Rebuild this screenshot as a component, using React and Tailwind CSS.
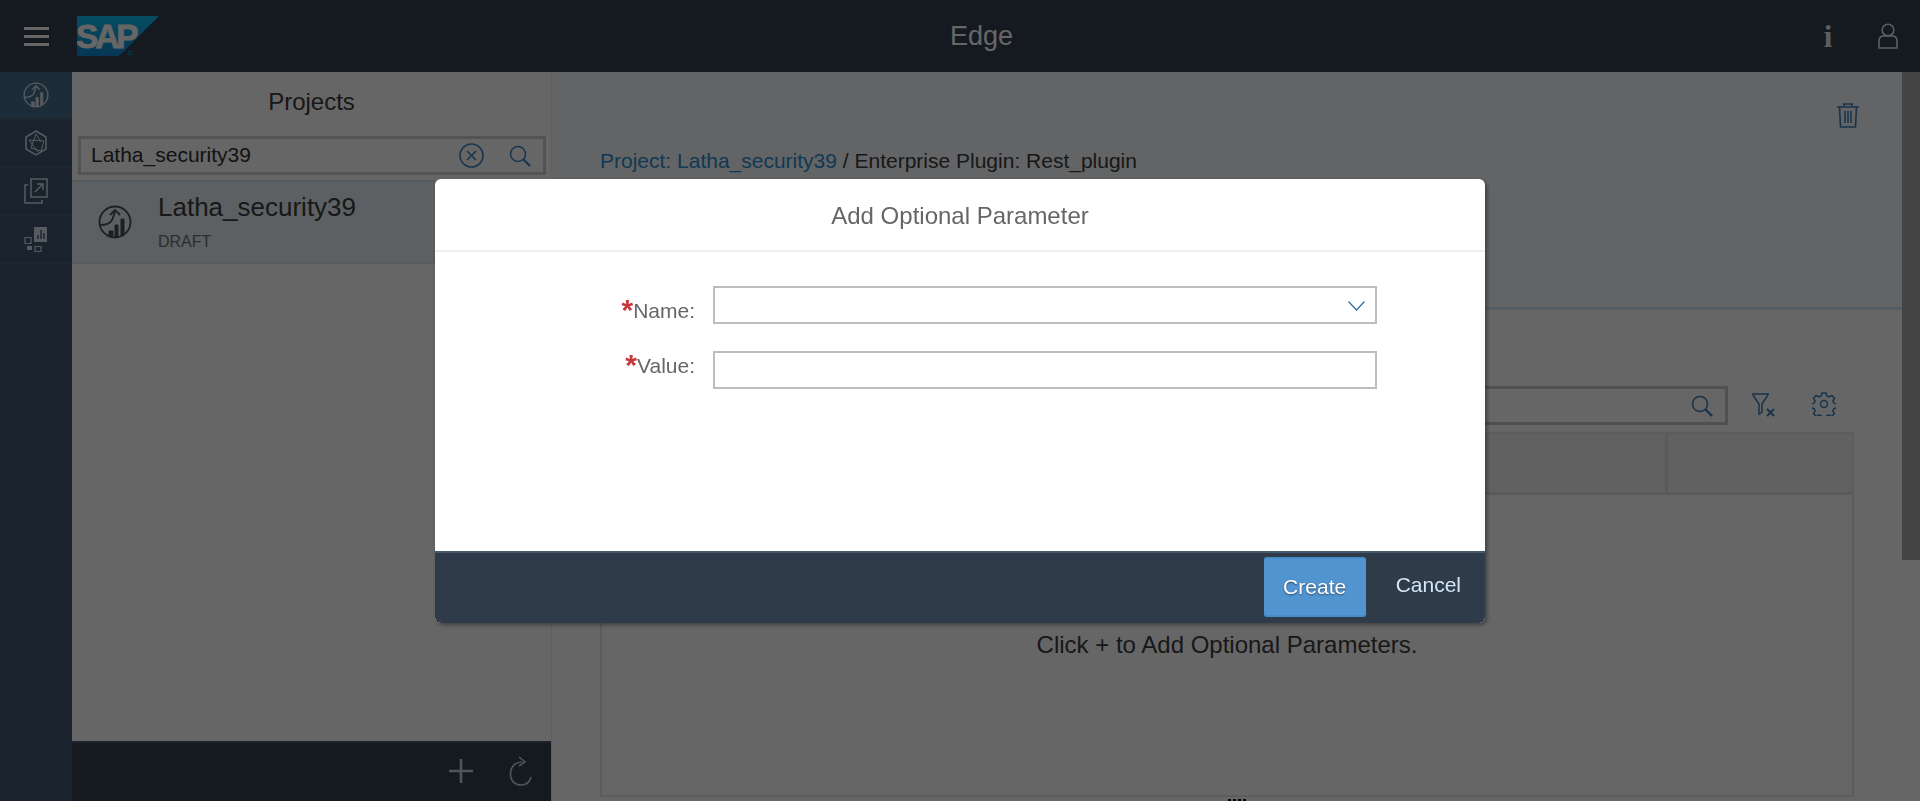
import { useState } from 'react';

// icons for the left rail
const RailChart = ({ className }) => (
  <svg className={className} viewBox="0 0 34 34" fill="none" stroke="currentColor" strokeWidth="1.800">
    <circle cx="17" cy="17" r="15.500" />
    <path d="M2 20c6 0 10-1 12-5 1-2 2-5 3-9" />
    <path d="M12 10l5-5 5 5" />
    <path d="M11 32v-6h4v6zM17 32V20h3v12zM23 31V14h3v15z" fill="currentColor" strokeWidth="1" />
  </svg>
);

const RailCube = ({ className }) => (
  <svg className={className} viewBox="0 0 24 26" fill="none" stroke="currentColor" strokeWidth="1.500">
    <path d="M12 1l10 6v12l-10 6-10-6V7z" />
    <path d="M12 4L7 18l10 3 3-10-15-1 9 12M12 4l5 8" strokeWidth="1" />
  </svg>
);

const RailOpen = ({ className }) => (
  <svg className={className} viewBox="0 0 24 26" fill="none" stroke="currentColor" strokeWidth="1.500">
    <path d="M7 1h16v18H7z" />
    <path d="M11 14l8-8M13 6h6v6" />
    <path d="M4 7H1v18h17v-3" />
  </svg>
);

const RailReport = ({ className }) => (
  <svg className={className} viewBox="0 0 24 26" fill="none">
    <path d="M10 1h13v15H10z" fill="currentColor" />
    <path d="M14 13V9M17 13V4M20 13V7" stroke="#425870" strokeWidth="1.400" />
    <path d="M1 11.500h6v6H1zM11 20.500h6v5h-6z" stroke="currentColor" strokeWidth="1.200" />
    <path d="M3 20h5v4H3z" fill="currentColor" />
  </svg>
);

const SearchIcon = ({ className }) => (
  <svg className={className} viewBox="0 0 22 22" fill="none" stroke="currentColor">
    <circle cx="9" cy="9" r="7.500" strokeWidth="1.600" />
    <path d="M14.500 14.500L21 21" strokeWidth="2.400" />
  </svg>
);

function Logo() {
  return (
    <svg className="w-[82px] h-[40px] shrink-0" viewBox="0 0 82 40">
      <defs>
        <linearGradient id="sapBlue" x1="0" y1="0" x2="0" y2="1">
          <stop offset="0" stopColor="#0fc0f0" />
          <stop offset="1" stopColor="#1088d8" />
        </linearGradient>
      </defs>
      <path d="M0 0h82L42 40H0z" fill="url(#sapBlue)" />
      <text x="-1" y="32" fontFamily="Liberation Sans, sans-serif" fontWeight="700" fontSize="33.500" letterSpacing="-3.200" fill="#ffffff" stroke="#ffffff" strokeWidth="0.800">
        SAP
      </text>
      <circle cx="53" cy="37" r="2" fill="none" stroke="#1090e0" strokeWidth="1" />
    </svg>
  );
}

function TopBar() {
  return (
    <header className="h-[72px] shrink-0 flex items-center bg-[#32414e]">
      <div className="w-[77px] shrink-0 flex flex-col gap-[5px] pl-6">
        <span className="block w-[25px] h-[3px] bg-white" />
        <span className="block w-[25px] h-[3px] bg-white" />
        <span className="block w-[25px] h-[3px] bg-white" />
      </div>
      <Logo />
      <div className="flex-1 pl-[4px] text-center text-[27px] text-white">Edge</div>
      <div className="w-[120px] shrink-0 flex items-center text-[#e6edf2]">
        <span className="w-6 ml-4 text-center text-[31px] leading-none font-bold font-['Liberation_Serif',serif]">i</span>
        <svg className="w-[20px] h-[26px] ml-[38px]" viewBox="0 0 20 26" fill="none" stroke="currentColor" strokeWidth="1.600">
          <circle cx="10" cy="7" r="5.800" />
          <path d="M1 25v-7c0-3 2-5 5-5h8c3 0 5 2 5 5v7z" />
        </svg>
      </div>
    </header>
  );
}

function Rail() {
  const items = [RailChart, RailCube, RailOpen, RailReport];
  return (
    <nav className="w-[72px] shrink-0 bg-[#425870]">
      {items.map((Icon, i) => (
        <div
          key={i}
          className={`h-[48px] flex items-center justify-center border-b-2 border-[#4a6279] text-[#d5e4f0] ${
            i === 0 ? 'bg-[#46708f]' : ''
          }`}
        >
          <Icon className={i === 0 ? 'w-[26px] h-[26px]' : 'w-[24px] h-[26px]'} />
        </div>
      ))}
    </nav>
  );
}

function ProjectsPanel() {
  const [query] = useState('Latha_security39');
  return (
    <aside className="w-[479px] shrink-0 flex flex-col bg-white">
      <div className="h-[64px] shrink-0 pt-[16px] text-center text-[24px] leading-[28px] text-[#3c3c3c]">Projects</div>
      <div className="ml-[6px] mr-[5px] h-[39px] shrink-0 flex items-center border-[3px] border-[#cfcfcf] pl-[10px] pr-[12px] pb-[2px] text-[21px] text-[#303030]">
        <span className="flex-1">{query}</span>
        <svg className="w-[25px] h-[25px] mt-[2px] text-[#3f86c4]" viewBox="0 0 25 25" fill="none" stroke="currentColor" strokeWidth="1.600">
          <circle cx="12.500" cy="12.500" r="11.500" />
          <path d="M8 8l9 9M17 8l-9 9" />
        </svg>
        <SearchIcon className="w-[22px] h-[22px] mt-[2px] ml-[25px] text-[#3f86c4]" />
      </div>
      <div className="mt-[5px] h-[84px] shrink-0 flex items-center border-t-2 border-b-2 border-[#dce5ea] bg-[#e6f0f6]">
        <RailChart className="w-[34px] h-[34px] ml-[26px] text-[#4a4f55]" />
        <div className="ml-[26px] pb-[2px]">
          <div className="text-[26px] leading-[32px] text-[#3c3c3c]">{query}</div>
          <div className="mt-[9px] text-[16px] leading-[20px] text-[#707070]">DRAFT</div>
        </div>
      </div>
      <div className="flex-1" />
      <div className="h-[60px] shrink-0 flex items-center justify-end border-t-2 border-[#46586a] bg-[#32414e] pr-[19px] pb-[3px] text-[#c8d4dc]">
        <svg className="w-[24px] h-[24px]" viewBox="0 0 24 24" fill="none" stroke="currentColor" strokeWidth="2.600">
          <path d="M12 0v24M0 12h24" />
        </svg>
        <svg className="w-[23px] h-[30px] ml-[36px]" viewBox="0 0 23 30" fill="none" stroke="currentColor" strokeWidth="1.600">
          <path d="M13 6C6 6 1.500 11 1.500 18S6 29 12 29s9-4 10-8" />
          <path d="M10 1l6 5-6 4" />
        </svg>
      </div>
    </aside>
  );
}

function MainPanel() {
  return (
    <main className="flex-1 min-w-0 flex flex-col border-l border-[#eeeeee] bg-white">
      <section className="h-[238px] shrink-0 border-b-[3px] border-[#d5e6f2] bg-[#f8fafc] pl-[48px] pr-[43px] pt-[31px]">
        <div className="flex justify-end text-[#3f80bc]">
          <svg className="w-[22px] h-[25px]" viewBox="0 0 22 25" fill="none" stroke="currentColor" strokeWidth="1.600">
            <path d="M0 4h22M7 3V1h8v2" />
            <path d="M2.500 4l1 20h15l1-20M8 8v12M11 8v12M14 8v12" />
          </svg>
        </div>
        <div className="mt-[21px] text-[21px] leading-[24px] text-[#3c3c3c]">
          <span className="text-[#2b8fd0]">Project: Latha_security39</span> / Enterprise Plugin: Rest_plugin
        </div>
      </section>
      <section className="flex-1 min-h-0 overflow-hidden pt-[76px] pl-[48px] pr-[48px]">
        <div className="flex items-center justify-end pr-[18px]">
          <div className="w-[500px] h-[39px] flex items-center justify-end border-[3px] border-[#c8c8c8] pr-[12px]">
            <SearchIcon className="w-[22px] h-[22px] text-[#3f80bc]" />
          </div>
          <svg className="w-[25px] h-[24px] ml-[23px] mb-[2px] text-[#3f80bc]" viewBox="0 0 25 24" fill="none" stroke="currentColor">
            <path d="M1 1h17M2 2l6 9v10l3-2v-8l6-9" strokeWidth="1.500" />
            <path d="M16 16l7 7M23 16l-7 7" strokeWidth="2" />
          </svg>
          <svg className="w-[24px] h-[24px] ml-[36px] mb-[3px] text-[#3f80bc]" viewBox="0 0 24 24" fill="none" stroke="currentColor" strokeWidth="1.500">
            <circle cx="12" cy="12" r="3.500" />
            <path d="M10 1h4l.7 3 2.400 1 2.600-1.600 2.800 2.800-1.600 2.600 1 2.400 3 .7v4l-3 .7-1 2.400 1.600 2.600-2.800 2.800-2.600-1.600-2.400 1-.7 3h-4l-.7-3-2.400-1-2.600 1.600-2.800-2.800 1.600-2.600-1-2.400-3-.7v-4l3-.7 1-2.400-1.600-2.600 2.800-2.800L6.900 5l2.400-1z" />
          </svg>
        </div>
        <div className="mt-[7px] h-[365px] border-2 border-[#e6e6e6]">
          <div className="h-[61px] flex justify-end border-b-[3px] border-[#e0e0e0] bg-[#f3f3f3]">
            <div className="w-[187px] border-l-[3px] border-[#e0e0e0]" />
          </div>
          <div className="pt-[136px] text-center text-[24px] leading-[28px] text-[#3c3c3c]">
            Click + to Add Optional Parameters.
          </div>
        </div>
        <div className="mt-[2px] flex justify-center gap-[2px] pl-[20px]">
          <span className="w-[3px] h-[3px] bg-black" />
          <span className="w-[3px] h-[3px] bg-black" />
          <span className="w-[3px] h-[3px] bg-black" />
          <span className="w-[3px] h-[3px] bg-black" />
        </div>
      </section>
    </main>
  );
}

function AddParameterModal() {
  return (
    <div className="fixed inset-0 z-10 bg-[rgba(0,0,0,0.6)] flex justify-center pt-[179px]">
      <div className="w-[1050px] h-[444px] flex flex-col rounded-[6px] overflow-hidden bg-white shadow-[2px_2px_4px_rgba(0,0,0,0.4)]">
        <div className="h-[73px] shrink-0 flex items-center justify-center border-b-2 border-[#eeeeee] pt-[2px] text-[24px] text-[#666666]">
          Add Optional Parameter
        </div>
        <div className="flex-1 pt-[34px] flex flex-col gap-[27px] text-[21px] text-[#666666]">
          <div className="h-[38px] flex gap-[18px]">
            <div className="w-[260px] pt-[13px] text-right leading-[24px]">
              <span className="relative top-[2px] text-[30px] leading-[0] font-bold text-[#c8383c]">*</span>Name:
            </div>
            <div className="w-[664px] flex items-center justify-end border-2 border-[#bdbdbd] pr-[10px]">
              <svg className="w-[17px] h-[10px] mt-[2px] text-[#2f6a9c]" viewBox="0 0 17 10" fill="none" stroke="currentColor" strokeWidth="1.200">
                <path d="M.5.500l8 8.500 8-8.500" />
              </svg>
            </div>
          </div>
          <div className="h-[38px] flex gap-[18px]">
            <div className="w-[260px] pt-[3px] text-right leading-[24px]">
              <span className="relative top-[2px] text-[30px] leading-[0] font-bold text-[#c8383c]">*</span>Value:
            </div>
            <div className="w-[664px] border-2 border-[#bdbdbd]" />
          </div>
        </div>
        <div className="h-[72px] shrink-0 flex items-center justify-end border-t-2 border-[#44586e] bg-[#2f3b48] text-[21px]">
          <button className="w-[102px] h-[60px] mb-[2px] flex items-center justify-center rounded-[3px] border-y-2 border-[#458ccb] bg-[#5294cf] text-white [text-shadow:0_1px_2px_rgba(0,0,0,0.5)]">
            Create
          </button>
          <button className="ml-[30px] mr-[24px] mb-[6px] text-[#d3e6f7]">Cancel</button>
        </div>
      </div>
    </div>
  );
}

export default function App() {
  return (
    <div className="relative h-screen flex flex-col overflow-hidden font-['Liberation_Sans',Arial,sans-serif]">
      <TopBar />
      <div className="flex-1 min-h-0 flex">
        <Rail />
        <ProjectsPanel />
        <MainPanel />
        <div className="w-[18px] shrink-0 bg-white">
          <div className="h-[488px] bg-[#ababab]" />
        </div>
      </div>
      <AddParameterModal />
    </div>
  );
}
